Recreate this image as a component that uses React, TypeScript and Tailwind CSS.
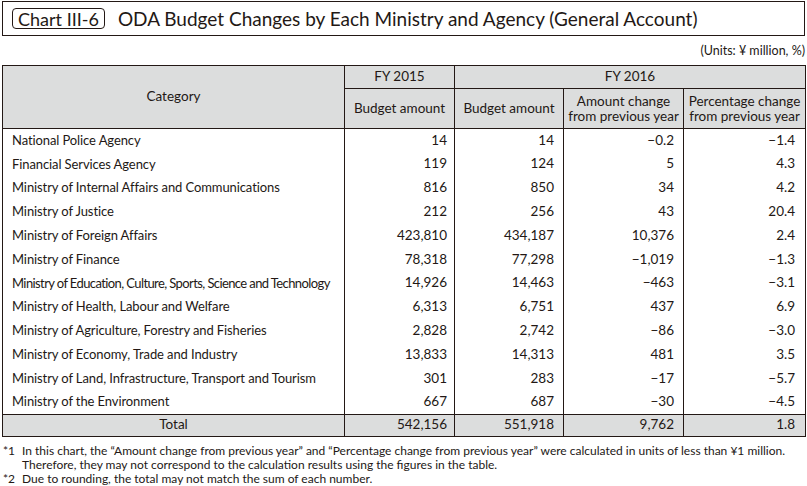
import React from "react";

interface Row {
  name: string;
  fy2015: string;
  fy2016: string;
  change: string;
  pct: string;
  tight?: boolean;
}

const rows: Row[] = [
  { name: "National Police Agency", fy2015: "14", fy2016: "14", change: "−0.2", pct: "−1.4" },
  { name: "Financial Services Agency", fy2015: "119", fy2016: "124", change: "5", pct: "4.3" },
  { name: "Ministry of Internal Affairs and Communications", fy2015: "816", fy2016: "850", change: "34", pct: "4.2" },
  { name: "Ministry of Justice", fy2015: "212", fy2016: "256", change: "43", pct: "20.4" },
  { name: "Ministry of Foreign Affairs", fy2015: "423,810", fy2016: "434,187", change: "10,376", pct: "2.4" },
  { name: "Ministry of Finance", fy2015: "78,318", fy2016: "77,298", change: "−1,019", pct: "−1.3" },
  { name: "Ministry of Education, Culture, Sports, Science and Technology", fy2015: "14,926", fy2016: "14,463", change: "−463", pct: "−3.1", tight: true },
  { name: "Ministry of Health, Labour and Welfare", fy2015: "6,313", fy2016: "6,751", change: "437", pct: "6.9" },
  { name: "Ministry of Agriculture, Forestry and Fisheries", fy2015: "2,828", fy2016: "2,742", change: "−86", pct: "−3.0" },
  { name: "Ministry of Economy, Trade and Industry", fy2015: "13,833", fy2016: "14,313", change: "481", pct: "3.5" },
  { name: "Ministry of Land, Infrastructure, Transport and Tourism", fy2015: "301", fy2016: "283", change: "−17", pct: "−5.7" },
  { name: "Ministry of the Environment", fy2015: "667", fy2016: "687", change: "−30", pct: "−4.5" },
];

const App = () => {
  return (
    <div className="w-[807px] h-[486px] bg-white text-[#231815] overflow-hidden" style={{ fontFamily: "Lato, 'Open Sans', sans-serif" }}>
      {/* Title bar */}
      <div className="mx-[2px] mt-[1px] h-[35px] border border-[#231815] flex items-center pl-[9px]">
        <span className="border border-[#231815] rounded-[4px] h-[21px] px-[5px] flex items-center text-[18px] leading-none">Chart III-6</span>
        <span className="ml-[13px] text-[19px] leading-none">ODA Budget Changes by Each Ministry and Agency (General Account)</span>
      </div>

      <div className="h-[29px] flex items-end justify-end pr-[2px] pb-[8px] text-[12.5px] leading-none">(Units: ¥ million, %)</div>

      {/* Table */}
      <table className="ml-[2px] w-[803px] border-collapse table-fixed text-[13.5px] leading-none">
        <colgroup>
          <col className="w-[342px]" />
          <col className="w-[110px]" />
          <col className="w-[109px]" />
          <col className="w-[120px]" />
          <col className="w-[122px]" />
        </colgroup>
        <thead>
          <tr className="h-[23px] bg-[#dcdddd]">
            <th rowSpan={2} className="border border-[#231815] font-normal text-center">Category</th>
            <th className="border border-[#231815] font-normal text-center">FY 2015</th>
            <th colSpan={3} className="border border-[#231815] font-normal text-center">FY 2016</th>
          </tr>
          <tr className="h-[40px] bg-[#dcdddd]">
            <th className="border border-[#231815] font-normal text-center">Budget amount</th>
            <th className="border border-[#231815] font-normal text-center">Budget amount</th>
            <th className="border border-[#231815] font-normal text-center leading-[15px]">Amount change<br />from previous year</th>
            <th className="border border-[#231815] font-normal text-center leading-[15px]">Percentage change<br />from previous year</th>
          </tr>
        </thead>
        <tbody>
          {rows.map((r) => (
            <tr key={r.name} className="h-[23.8px]">
              <td className={`border-x border-[#231815] pl-[9px] whitespace-nowrap text-[13px] ${r.tight ? "tracking-[-0.6px]" : "tracking-[-0.1px]"}`}>{r.name}</td>
              <td className="border-x border-[#231815] text-right pr-[7px]">{r.fy2015}</td>
              <td className="border-x border-[#231815] text-right pr-[9px]">{r.fy2016}</td>
              <td className="border-x border-[#231815] text-right pr-[9px]">{r.change}</td>
              <td className="border-x border-[#231815] text-right pr-[10px]">{r.pct}</td>
            </tr>
          ))}
          <tr className="h-[22px] bg-[#dcdddd]">
            <td className="border border-[#231815] text-center">Total</td>
            <td className="border border-[#231815] text-right pr-[7px]">542,156</td>
            <td className="border border-[#231815] text-right pr-[9px]">551,918</td>
            <td className="border border-[#231815] text-right pr-[9px]">9,762</td>
            <td className="border border-[#231815] text-right pr-[10px]">1.8</td>
          </tr>
        </tbody>
      </table>

      {/* Notes */}
      <div className="mt-[7px] pl-[3px] text-[12px] leading-[14px]">
        <div className="flex">
          <span className="w-[19px] shrink-0">*1</span>
          <span>
            In this chart, the “Amount change from previous year” and “Percentage change from previous year” were calculated in units of less than ¥1 million.
            <br />
            Therefore, they may not correspond to the calculation results using the figures in the table.
          </span>
        </div>
        <div className="flex">
          <span className="w-[19px] shrink-0">*2</span>
          <span>Due to rounding, the total may not match the sum of each number.</span>
        </div>
      </div>
    </div>
  );
};

export default App;
